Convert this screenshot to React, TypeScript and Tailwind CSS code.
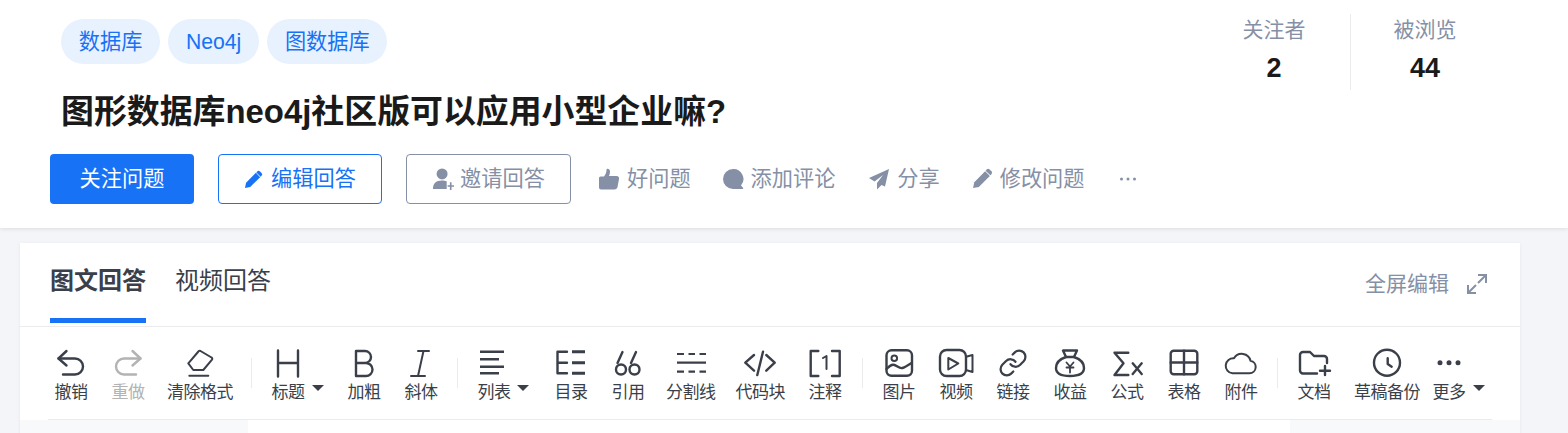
const FONT = "font-['Liberation_Sans','Noto_Sans_CJK_SC',sans-serif]"

const stroke = { fill: "none", stroke: "currentColor", strokeWidth: 2.4, strokeLinecap: "round" as const, strokeLinejoin: "round" as const }

// every icon sits in a 36x32 box centred over its label
const icons: Record<string, React.ReactNode> = {
  undo: <g {...stroke}><path d="M13.500 3 5.500 10.500l8 7" /><path d="M5.500 10.500H22a8 8 0 0 1 0 16H10" /></g>,
  redo: <g {...stroke}><path d="M22.500 3l8 7.500-8 7" /><path d="M30.500 10.500H14a8 8 0 0 0 0 16h12" /></g>,
  eraser: <g {...stroke} strokeWidth="2"><path d="M6.300 15.300 16 4a2 2 0 0 1 2.500-1l11 6.500a1.500 1.500 0 0 1 .5 2.200L21.300 22H11.300z" /><path d="M7.300 27.700h19" /></g>,
  h: <g {...stroke}><path d="M8 2.500v26M28 2.500v26M8 15h20" /></g>,
  b: <g {...stroke}><path d="M10 3h9a6 6 0 0 1 0 12H10zM10 15h10a6.500 6.500 0 0 1 0 13H10z" /></g>,
  i: <g {...stroke} strokeWidth="2"><path d="M15 3h11M8 28h14M20.500 3 15 28" /></g>,
  list: <g {...stroke} strokeLinecap="butt"><path d="M4 3.700h24M4 11.300h19M4 18.700h24M4 25.300h19" /></g>,
  toc: <g {...stroke}><path d="M14 3.700H4.500v21.600H14M4.500 14.700H14" /><path d="M19 3.700h13M19 14.700h13M19 25.300h13" strokeWidth="3" strokeLinecap="butt" /></g>,
  quote: <g {...stroke}><path d="M12.500 4 7.500 15" /><circle cx="11" cy="21.500" r="5" /><path d="M26 4l-5 11" /><circle cx="24.500" cy="21.500" r="5" /></g>,
  divider: <g {...stroke} strokeLinecap="butt" strokeWidth="2.200"><path d="M4 6h7M15.500 6H22M26.500 6H33M4 14.700h29M4 23.700h7M15.500 23.700H22M26.500 23.700H33" /></g>,
  code: <g {...stroke}><path d="M12 7 3.300 14.700 12 22.700M24.300 7l8.400 7.700-8.400 8M21 3.700 15.300 27" /></g>,
  note: <g {...stroke}><path d="M11.300 3H3.700v25h7.600M25 3h7.700v25H25" /><path d="M16 10l3.500-2v13" strokeWidth="2" /></g>,
  image: <g {...stroke}><rect x="5.500" y="2.300" width="25.500" height="25.500" rx="5" /><circle cx="13.300" cy="10.300" r="2.800" strokeWidth="2" /><path d="M5.500 21c3-3 5-5 8-4s5 4 8 3 6-3 9-5" /></g>,
  video: <g {...stroke}><rect x="2" y="2" width="26" height="26" rx="6.500" /><path d="M10.300 10v11.500l10-6zM28 8.700l6.500-1.700v17l-6.500-2" strokeWidth="2" /></g>,
  link: <g {...stroke} strokeWidth="1.800" transform="translate(3 0) scale(1.250)"><path d="M10 13a5 5 0 0 0 7.540.54l3-3a5 5 0 0 0-7.070-7.070l-1.720 1.710" /><path d="M14 11a5 5 0 0 0-7.540-.54l-3 3a5 5 0 0 0 7.070 7.070l1.710-1.710" /></g>,
  money: <g {...stroke}><path d="M11 2.500h14l-3 6.500c6 2 10 6 10 11 0 6-6 8-14 8s-14-2-14-8c0-5 4-9 10-11z" /><path d="M14 9h8" /><path d="M14.500 14.500 18 18.500l3.500-4M14.500 19.500h7M18 18.500v6" strokeWidth="1.800" /></g>,
  formula: <g {...stroke}><path d="M19.300 4.700H5.500l9 10.600-9 11.700h13.800" /><path d="M23.700 15.300l9 10.700M32.700 15.300l-9 10.700" /></g>,
  table: <g {...stroke}><rect x="4.700" y="2.700" width="26.600" height="23.600" rx="3" /><path d="M18 2.700v23.600M4.700 14.500h26.600" /></g>,
  cloud: <g {...stroke} strokeWidth="2"><path d="M9.500 25.300h17a6.300 6.300 0 0 0 1-12.500 9 9 0 0 0-16.500-2.500 7.500 7.500 0 0 0-1.500 15z" /></g>,
  folder: <g {...stroke}><path d="M21 25.500H7a3 3 0 0 1-3-3V7a3 3 0 0 1 3-3h7l4 4h10a3 3 0 0 1 3 3v4" /><path d="M29 18v9M24 22.700h10" /></g>,
  clock: <g {...stroke}><circle cx="18" cy="14.700" r="13" /><path d="M18.700 10.300V16l4 2.700" /></g>,
  more: <g fill="currentColor"><circle cx="9" cy="14.700" r="2.500" /><circle cx="18" cy="14.700" r="2.500" /><circle cx="27" cy="14.700" r="2.500" /></g>,
}

function Tool({ icon, label, caret, disabled, className = "" }: { icon: string; label: string; caret?: string; disabled?: boolean; className?: string }) {
  return (
    <div className={`flex min-w-[34px] flex-col items-center ${disabled ? "text-[#b3b3b3]" : "text-[#3a3f4a]"} ${className}`}>
      <svg viewBox="0 0 36 32" className="mx-[-1px] h-[32px] w-[36px]">{icons[icon]}</svg>
      <div className="relative mt-[1px] whitespace-nowrap text-[17px] leading-[24px] tracking-[-0.5px]">
        {label}
        {caret && (
          <svg viewBox="0 0 12 6" className={`absolute left-full top-[4px] h-[6px] w-[12px] ${caret}`} fill="currentColor">
            <path d="M0 0h12L6 6z" />
          </svg>
        )}
      </div>
    </div>
  )
}

function Sep({ className }: { className: string }) {
  return <div className={`mt-[10px] h-[30px] w-px bg-[#ebebeb] ${className}`} />
}

function Pen({ className }: { className: string }) {
  return (
    <svg viewBox="0 0 20 20" className={className} fill="currentColor">
      <path d="M1 19l1.200-5.500L12.500 3l4.500 4.500L6.500 18z" />
      <path d="M14 1.500a2 2 0 0 1 2.800 0l1.700 1.700a2 2 0 0 1 0 2.800l-1 1L13 2.500z" />
    </svg>
  )
}

function Action({ icon, label, className }: { icon: React.ReactNode; label: string; className: string }) {
  return (
    <div className={`flex items-center gap-[7px] text-[21.2px] text-[#8590a6] ${className}`}>
      {icon}
      {label}
    </div>
  )
}

export default function App() {
  return (
    <div className={`h-[433px] overflow-hidden bg-[#f4f5f9] ${FONT}`}>
      <div className="relative h-[228px] bg-white pl-[50px] pr-[69px] shadow-[0_1px_4px_rgba(0,0,0,0.1)]">
        <div className="flex justify-between">
          <div>
            <div className="ml-[11px] flex gap-[8px] pt-[19px]">
              {["数据库", "Neo4j", "图数据库"].map((t) => (
                <span key={t} className="flex h-[45px] items-center rounded-full bg-[#e8f1fe] px-[17.8px] text-[21.2px] text-[#1772f6]">{t}</span>
              ))}
            </div>
            <h1 className="ml-[11px] mt-[27px] text-[32.9px] font-bold leading-[42px] text-[#1a1a1a]">图形数据库neo4j社区版可以应用小型企业嘛?</h1>
          </div>
          <div className="mt-[14px] flex h-[76px]">
            <div className="w-[152px] text-center">
              <div className="text-[21px] leading-[32px] text-[#8590a6]">关注者</div>
              <div className="mt-[6px] text-[27px] font-bold leading-[32px] text-[#1a1a1a]">2</div>
            </div>
            <div className="w-[149px] border-l border-[#ebebeb] text-center">
              <div className="text-[21px] leading-[32px] text-[#8590a6]">被浏览</div>
              <div className="mt-[6px] text-[27px] font-bold leading-[32px] text-[#1a1a1a]">44</div>
            </div>
          </div>
        </div>
        <div className="mt-[21px] flex h-[50px] items-center">
          <button className="h-[50px] w-[144px] rounded-[4px] bg-[#1772f6] text-[21.2px] text-white">关注问题</button>
          <button className="ml-[24px] flex h-[50px] w-[164px] items-center justify-center gap-[8px] rounded-[4px] border border-[#1772f6] text-[21.2px] text-[#1772f6]">
            <Pen className="h-[19px] w-[19px]" />
            编辑回答
          </button>
          <button className="ml-[24px] flex h-[50px] w-[165px] items-center justify-center gap-[6px] rounded-[4px] border border-[#8590a6] text-[21.2px] text-[#8590a6]">
            <svg viewBox="0 0 24 24" className="h-[22px] w-[22px]" fill="currentColor">
              <circle cx="11" cy="6.500" r="6" />
              <path d="M1 23c0-6 3-9.500 10-9.500 2 0 3.500.4 5 1V23z" />
              <path d="M19.500 15.500h1.800v3.200h2.700v1.800h-2.700V24h-1.800v-3.500H17v-1.800h2.500z" />
            </svg>
            邀请回答
          </button>
          <Action className="ml-[27px]" label="好问题" icon={
            <svg viewBox="0 0 22 22" className="h-[22px] w-[22px]" fill="currentColor">
              <path d="M1 10a1.500 1.500 0 0 1 1.500-1.500H6c1.500-2 2.500-4 2.500-6.500 0-2 3.500-1.500 3.500 1.500 0 1.500-.3 3-1 4.500h7.500c2 0 3 1.500 2.500 3l-1.500 8c-.3 1.500-1.500 2.500-3 2.500H3a2 2 0 0 1-2-2z" />
            </svg>
          } />
          <Action className="ml-[31px]" label="添加评论" icon={
            <svg viewBox="0 0 22 22" className="h-[22px] w-[22px]" fill="currentColor">
              <path d="M11 1a10 10 0 0 0 0 20h9.500c.8 0 1-.8.5-1.300L19 17.500A10 10 0 0 0 11 1z" />
            </svg>
          } />
          <Action className="ml-[33px]" label="分享" icon={
            <svg viewBox="0 0 22 22" className="h-[22px] w-[22px]" fill="currentColor">
              <path d="M21 1 1 10l5.500 3.500L15 7l-6 8v6.500l4.500-4.500 3.500 1.500z" />
            </svg>
          } />
          <Action className="ml-[32px]" label="修改问题" icon={<Pen className="h-[21px] w-[21px]" />} />
          <svg viewBox="0 0 16 4" className="ml-[35px] h-[4px] w-[16px] text-[#8590a6]" fill="currentColor">
            <circle cx="1.500" cy="2" r="1.500" />
            <circle cx="8" cy="2" r="1.500" />
            <circle cx="14.500" cy="2" r="1.500" />
          </svg>
        </div>
      </div>

      <div className="ml-[20px] mt-[15px] h-[300px] w-[1500px] bg-white shadow-[0_1px_4px_rgba(0,0,0,0.06)]">
        <div className="flex h-[84px] items-start justify-between border-b border-[#ebebeb] pl-[30px] pr-[33px]">
          <div className="flex">
            <div className="flex h-[80px] items-center border-b-[5px] border-[#1772f6] text-[24px] font-bold text-[#3a3f4a]">图文回答</div>
            <div className="ml-[29px] flex h-[80px] items-center pb-[4px] text-[24px] text-[#3a3f4a]">视频回答</div>
          </div>
          <div className="mt-[26px] flex items-center text-[21px] leading-[30px] text-[#8590a6]">
            全屏编辑
            <svg viewBox="0 0 20 20" className="ml-[18px] h-[20px] w-[20px]" fill="none" stroke="currentColor" strokeWidth="2">
              <path d="M11 1h8v8M19 1 11 9M1 11v8h8M1 19l8-8" />
            </svg>
          </div>
        </div>
        <div className="mx-[28px] flex h-[93px] items-start border-b border-[#ebebeb] pl-[6px] pt-[21px]">
          <div className="flex gap-[23px]">
            <Tool icon="undo" label="撤销" />
            <Tool icon="redo" label="重做" disabled />
            <Tool icon="eraser" label="清除格式" className="ml-[-1px]" />
          </div>
          <Sep className="ml-[18px] mr-[19px]" />
          <div className="flex gap-[23px]">
            <Tool icon="h" label="标题" caret="ml-[7px]" />
            <Tool icon="b" label="加粗" className="ml-[19px]" />
            <Tool icon="i" label="斜体" />
          </div>
          <Sep className="ml-[19px] mr-[19px]" />
          <div className="flex gap-[23px]">
            <Tool icon="list" label="列表" caret="ml-[6px]" />
            <Tool icon="toc" label="目录" className="ml-[20px]" />
            <Tool icon="quote" label="引用" />
            <Tool icon="divider" label="分割线" className="ml-[-2px]" />
            <Tool icon="code" label="代码块" className="ml-[-3px]" />
            <Tool icon="note" label="注释" />
          </div>
          <Sep className="ml-[20px] mr-[19px]" />
          <div className="flex gap-[23px]">
            <Tool icon="image" label="图片" />
            <Tool icon="video" label="视频" />
            <Tool icon="link" label="链接" />
            <Tool icon="money" label="收益" />
            <Tool icon="formula" label="公式" />
            <Tool icon="table" label="表格" />
            <Tool icon="cloud" label="附件" />
          </div>
          <Sep className="ml-[19px] mr-[19px]" />
          <div className="flex gap-[23px]">
            <Tool icon="folder" label="文档" />
            <Tool icon="clock" label="草稿备份" />
            <Tool icon="more" label="更多" caret="ml-[7px]" className="ml-[-11px]" />
          </div>
        </div>
        <div className="flex h-[20px]">
          <div className="w-[228px] bg-[#f8f9fb]" />
          <div className="w-[1042px] bg-white" />
          <div className="flex-1 bg-[#f8f9fb]" />
        </div>
      </div>
    </div>
  )
}
